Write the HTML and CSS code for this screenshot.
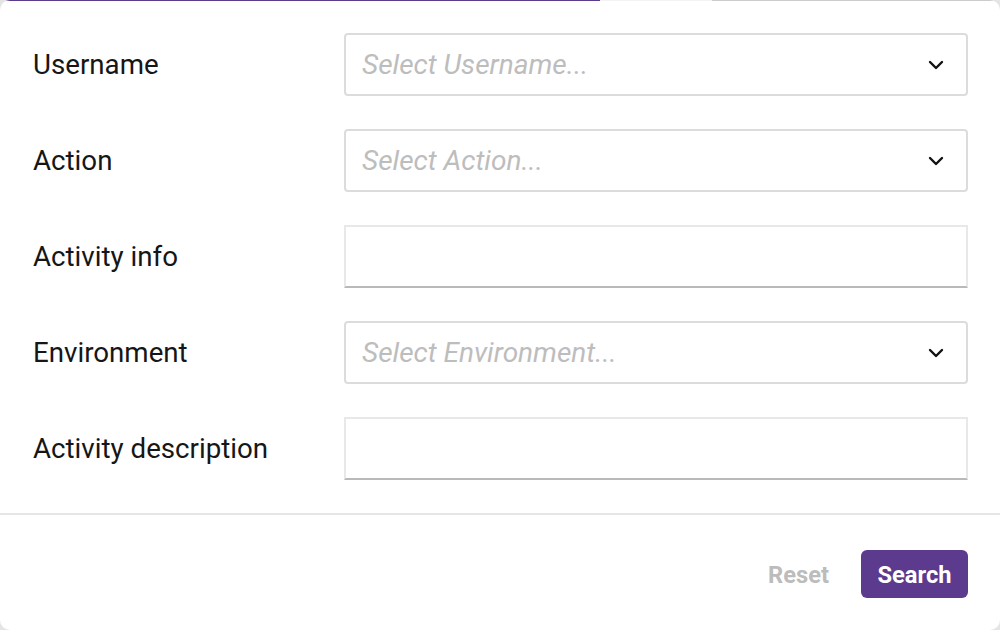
FILE: index.html
```html
<!DOCTYPE html>
<html>
<head>
<meta charset="utf-8">
<link rel="stylesheet" href="styles.css">
</head>
<body>
<div class="card">
  <div class="progress">
    <div class="progress-fill"></div>
    <div class="progress-buffer"></div>
    <div class="progress-track"></div>
  </div>
  <form class="form">
    <div class="row">
      <label class="label">Username</label>
      <div class="select">
        <span class="placeholder">Select Username...</span>
        <svg class="chevron" width="16" height="10" viewBox="0 0 16 10"><path d="M2 2 L8 8 L14 2" fill="none" stroke="#111" stroke-width="2.4" stroke-linecap="round" stroke-linejoin="round"/></svg>
      </div>
    </div>
    <div class="row">
      <label class="label">Action</label>
      <div class="select">
        <span class="placeholder">Select Action...</span>
        <svg class="chevron" width="16" height="10" viewBox="0 0 16 10"><path d="M2 2 L8 8 L14 2" fill="none" stroke="#111" stroke-width="2.4" stroke-linecap="round" stroke-linejoin="round"/></svg>
      </div>
    </div>
    <div class="row">
      <label class="label">Activity info</label>
      <div class="text-input"></div>
    </div>
    <div class="row">
      <label class="label">Environment</label>
      <div class="select">
        <span class="placeholder">Select Environment...</span>
        <svg class="chevron" width="16" height="10" viewBox="0 0 16 10"><path d="M2 2 L8 8 L14 2" fill="none" stroke="#111" stroke-width="2.4" stroke-linecap="round" stroke-linejoin="round"/></svg>
      </div>
    </div>
    <div class="row">
      <label class="label">Activity description</label>
      <div class="text-input"></div>
    </div>
  </form>
  <div class="footer">
    <button class="btn btn-reset" type="button">Reset</button>
    <button class="btn btn-search" type="button">Search</button>
  </div>
</div>
</body>
</html>
```
FILE: styles.css
```css
* { box-sizing: border-box; }
html, body { margin: 0; padding: 0; }
body {
  background: #e4e4e4;
  font-family: Roboto, "Liberation Sans", sans-serif;
  width: 1000px;
  height: 630px;
  overflow: hidden;
}
.card {
  width: 1000px;
  height: 630px;
  background: #fff;
  border-radius: 10px;
  overflow: hidden;
  display: flex;
  flex-direction: column;
}
.progress {
  height: 1px;
  display: flex;
  flex-shrink: 0;
}
.progress-fill { width: 600px; background: #5c3a8d; }
.progress-buffer { width: 112px; background: #f3f3f3; }
.progress-track { flex: 1; background: #cccccc; }
.form {
  padding: 32px 32px 33px 33px;
  display: flex;
  flex-direction: column;
  gap: 33px;
  border-bottom: 2px solid #e6e6e6;
}
.row {
  display: flex;
  align-items: center;
  height: 63px;
}
.label {
  width: 311px;
  font-size: 27.7px;
  color: #161616;
}
.select {
  flex: 1;
  height: 63px;
  border: 2px solid #dcdcdc;
  border-radius: 4px;
  display: flex;
  align-items: center;
  justify-content: space-between;
  padding: 0 22px 0 16px;
}
.placeholder {
  font-size: 28px;
  font-style: italic;
  color: #bdbdbd;
}
.chevron { display: block; }
.text-input {
  flex: 1;
  height: 63px;
  border: 2px solid #e8e8e8;
  border-bottom-color: #b9b9b9;
}
.footer {
  display: flex;
  justify-content: flex-end;
  align-items: center;
  gap: 32px;
  padding: 35px 32px 32px 0;
}
.btn {
  font-family: Roboto, "Liberation Sans", sans-serif;
  font-size: 23.7px;
  font-weight: 700;
  border: none;
  height: 48px;
  border-radius: 6px;
  cursor: pointer;
  line-height: 50px;
}
.btn-reset {
  background: transparent;
  color: #bcbcbc;
  padding: 0;
}
.btn-search {
  background: #5c3a8d;
  color: #fff;
  padding: 0;
  width: 107px;
}
```
